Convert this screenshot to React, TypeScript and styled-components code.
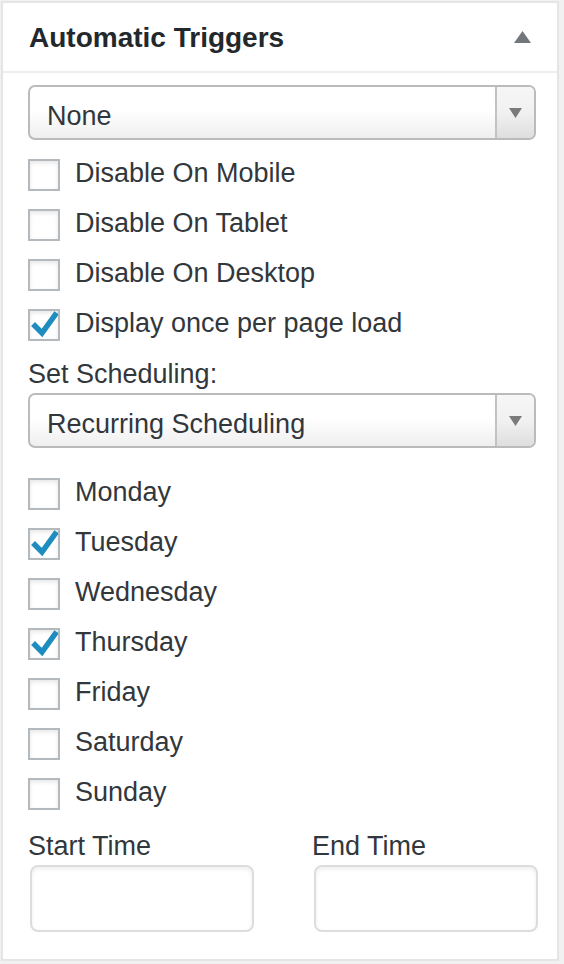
import React from "react";
import styled, { createGlobalStyle } from "styled-components";

const Global = createGlobalStyle`
  html, body { margin: 0; padding: 0; background: #f1f1f1; }
  body { font-family: "Liberation Sans", Arial, sans-serif; }
  * { box-sizing: border-box; }
`;

const Panel = styled.div`
  margin: 1px 0 0 1px;
  width: 558px;
  height: 960px;
  background: #fff;
  border: 2px solid #e5e5e5;
  display: flex;
  flex-direction: column;
`;

const Header = styled.div`
  height: 70px;
  border-bottom: 2px solid #eee;
  display: flex;
  align-items: center;
  justify-content: space-between;
  padding: 0 26px 0 26px;
`;

const Title = styled.h2`
  margin: 0;
  font-size: 28px;
  font-weight: 700;
  color: #23282d;
  line-height: 32px;
  margin-top: 2px;
`;

const Body = styled.div`
  padding: 12px 21px 0 25px;
  display: flex;
  flex-direction: column;
`;

const SelectBox = styled.div<{ $mt?: number }>`
  margin-top: ${(p) => p.$mt ?? 0}px;
  height: 55px;
  border: 2px solid #bbb;
  border-radius: 7px;
  display: flex;
  overflow: hidden;
  background: linear-gradient(#fff 0%, #fff 45%, #efefef 100%);
`;

const SelectText = styled.div`
  flex: 1;
  display: flex;
  align-items: center;
  padding: 7px 0 0 17px;
  font-size: 27px;
  color: #32373c;
`;

const SelectArrow = styled.div`
  width: 39px;
  border-left: 2px solid #c2c2c2;
  background: linear-gradient(#f6f6f6 0%, #f1f1f1 50%, #dedede 100%);
  display: flex;
  align-items: center;
  justify-content: center;
`;

const CheckList = styled.div<{ $mt: number }>`
  margin-top: ${(p) => p.$mt}px;
  display: flex;
  flex-direction: column;
  gap: 18px;
`;

const Row = styled.label`
  display: flex;
  align-items: center;
  height: 32px;
  gap: 15px;
`;

const Box = styled.span`
  width: 32px;
  height: 32px;
  border: 2px solid #b4b9be;
  background: #fff;
  box-shadow: inset 0 2px 4px rgba(0, 0, 0, 0.1);
  display: flex;
  align-items: center;
  justify-content: center;
  flex-shrink: 0;
`;

const LabelText = styled.span`
  font-size: 27px;
  line-height: 32px;
  color: #32373c;
  margin-top: -4px;
`;

const FieldLabel = styled.div<{ $mt: number }>`
  margin-top: ${(p) => p.$mt}px;
  font-size: 27px;
  line-height: 32px;
  color: #32373c;
`;

const TimeGrid = styled.div`
  margin-top: 20px;
  display: grid;
  grid-template-columns: 284px 240px;
`;

const TimeCol = styled.div`
  display: flex;
  flex-direction: column;
`;

const TimeLabel = styled.div`
  font-size: 27px;
  line-height: 32px;
  color: #32373c;
`;

const TimeInput = styled.input`
  margin: 3px 0 0 2px;
  width: 224px;
  height: 67px;
  border: 2px solid #ddd;
  border-radius: 8px;
  box-shadow: inset 0 2px 4px rgba(0, 0, 0, 0.07);
  background: #fff;
  outline: none;
  font-size: 26px;
`;

const Triangle = ({ dir, w, h, color }: { dir: "up" | "down"; w: number; h: number; color: string }) => (
  <svg width={w} height={h} viewBox={`0 0 ${w} ${h}`}>
    {dir === "up" ? (
      <polygon points={`0,${h} ${w / 2},0 ${w},${h}`} fill={color} />
    ) : (
      <polygon points={`0,0 ${w},0 ${w / 2},${h}`} fill={color} />
    )}
  </svg>
);

const Check = () => (
  <svg width="28" height="28" viewBox="0 0 28 28">
    <polyline
      points="5,15 12,22 25,4"
      fill="none"
      stroke="#1e8cbe"
      strokeWidth="5.5"
      strokeLinecap="square"
      strokeLinejoin="miter"
    />
  </svg>
);

const Select = ({ value, mt }: { value: string; mt?: number }) => (
  <SelectBox $mt={mt}>
    <SelectText>{value}</SelectText>
    <SelectArrow>
      <Triangle dir="down" w={13} h={10} color="#7a7a7a" />
    </SelectArrow>
  </SelectBox>
);

const CheckItem = ({ label, checked }: { label: string; checked?: boolean }) => (
  <Row>
    <Box>{checked && <Check />}</Box>
    <LabelText>{label}</LabelText>
  </Row>
);

const devices = [
  { label: "Disable On Mobile" },
  { label: "Disable On Tablet" },
  { label: "Disable On Desktop" },
  { label: "Display once per page load", checked: true },
];

const days = [
  { label: "Monday" },
  { label: "Tuesday", checked: true },
  { label: "Wednesday" },
  { label: "Thursday", checked: true },
  { label: "Friday" },
  { label: "Saturday" },
  { label: "Sunday" },
];

export default function App() {
  return (
    <>
      <Global />
      <Panel>
        <Header>
          <Title>Automatic Triggers</Title>
          <Triangle dir="up" w={17} h={12} color="#72777c" />
        </Header>
        <Body>
          <Select value="None" />
          <CheckList $mt={19}>
            {devices.map((d) => (
              <CheckItem key={d.label} {...d} />
            ))}
          </CheckList>
          <FieldLabel $mt={17}>Set Scheduling:</FieldLabel>
          <Select value="Recurring Scheduling" mt={3} />
          <CheckList $mt={30}>
            {days.map((d) => (
              <CheckItem key={d.label} {...d} />
            ))}
          </CheckList>
          <TimeGrid>
            <TimeCol>
              <TimeLabel>Start Time</TimeLabel>
              <TimeInput type="text" />
            </TimeCol>
            <TimeCol>
              <TimeLabel>End Time</TimeLabel>
              <TimeInput type="text" />
            </TimeCol>
          </TimeGrid>
        </Body>
      </Panel>
    </>
  );
}
